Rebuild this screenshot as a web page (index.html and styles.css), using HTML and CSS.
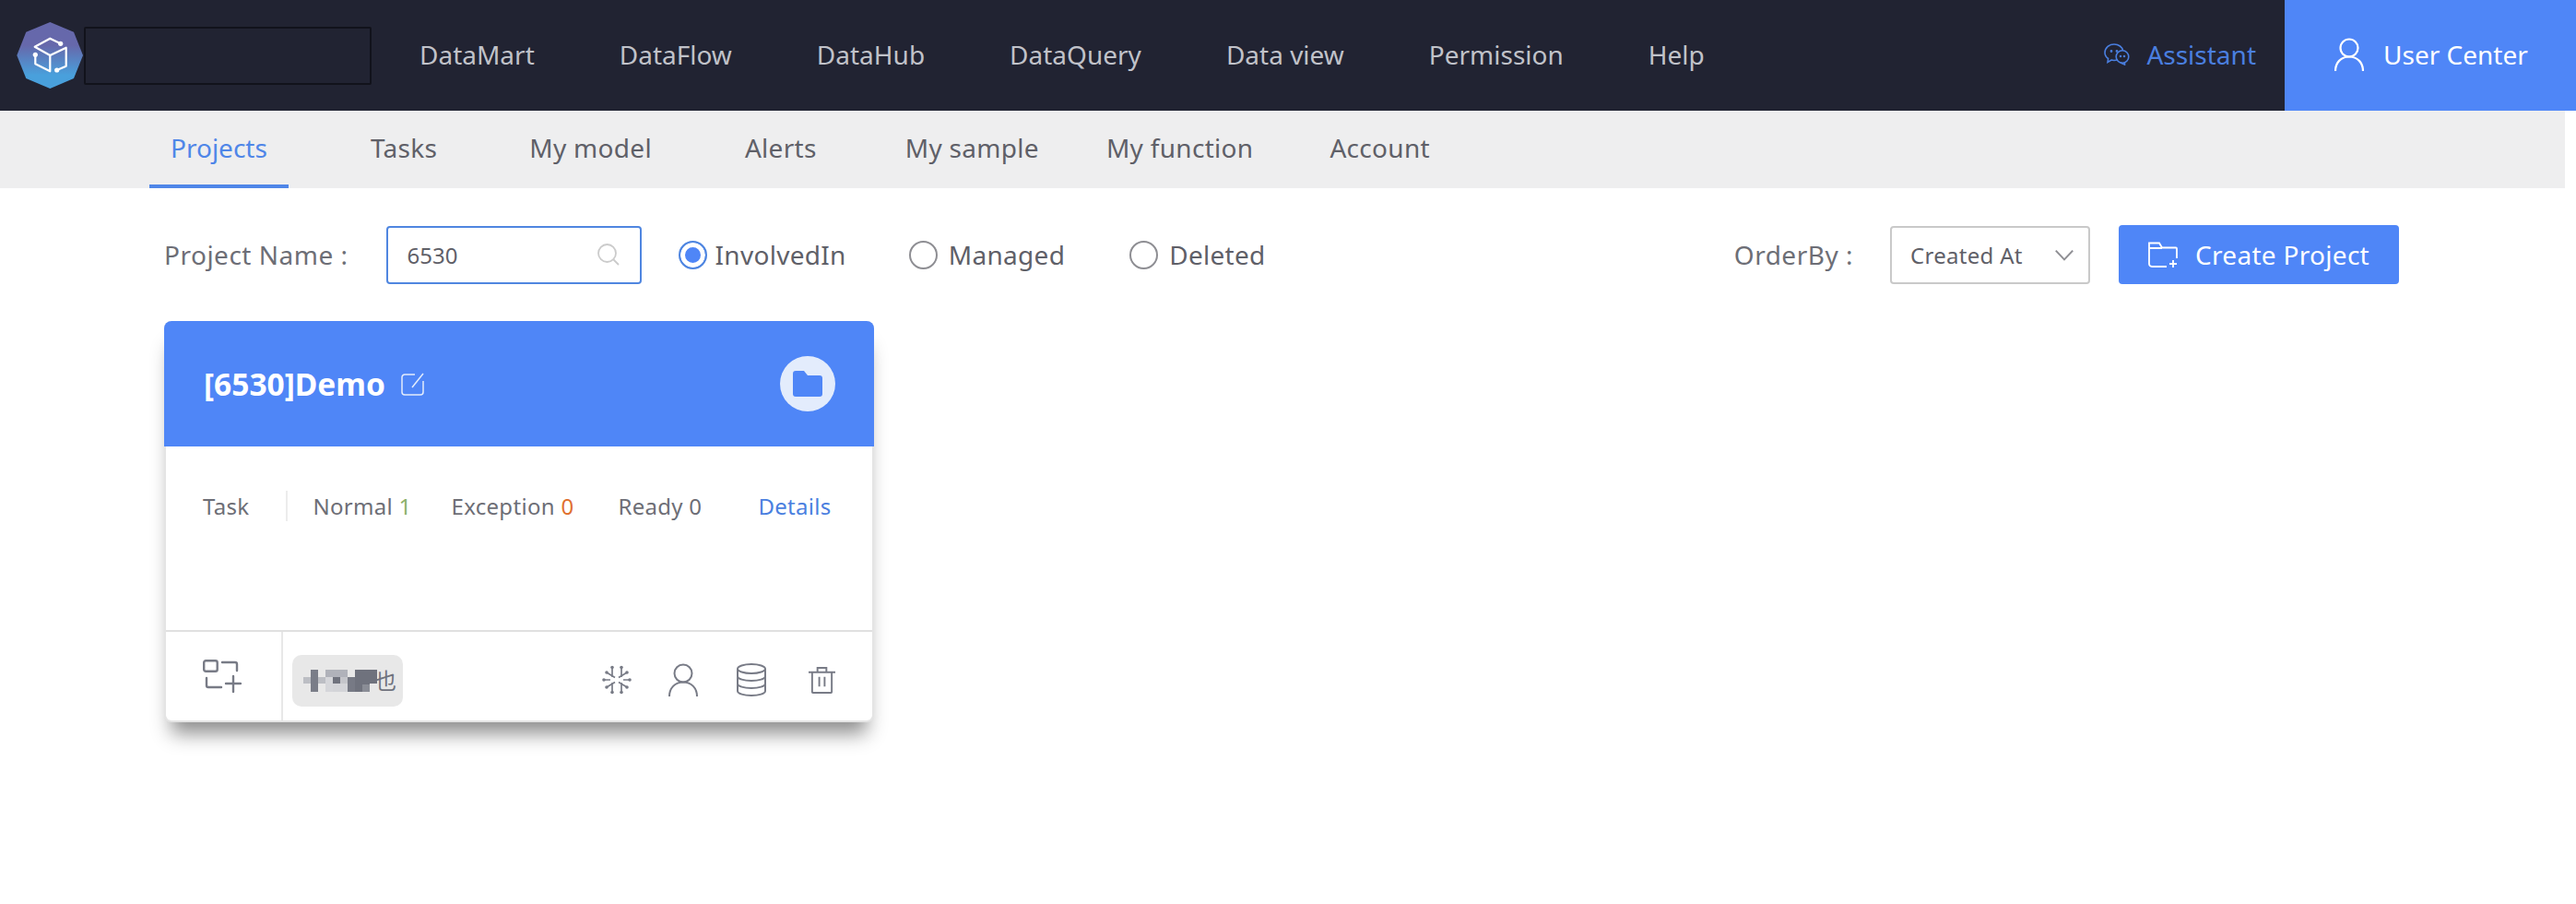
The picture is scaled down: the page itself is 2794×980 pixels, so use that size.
FILE: index.html
```html
<!DOCTYPE html>
<html>
<head>
  <title>Projects</title>
  <link rel="stylesheet" href="styles.css">
</head>
<body>
  <header class="topbar">
    <svg class="logo" viewBox="18 24 72 72">
      <defs>
        <linearGradient id="logoFill" x1="0" y1="0" x2="0" y2="1">
          <stop offset="0.35" stop-color="#6668ab"/>
          <stop offset="0.8" stop-color="#49a0dc"/>
        </linearGradient>
      </defs>
      <polygon points="54.3,24 80,34.7 90,60 80,85 54.3,96 28.3,85 18.3,60 28.3,34.7" fill="url(#logoFill)"/>
      <g fill="none" stroke="#fff" stroke-width="2.2" stroke-linejoin="round">
        <path d="M65.7 47.3L54.3 41.7 37.7 50.7 54.3 60 71.7 51.7V71.7L61.7 76"/>
        <path d="M54.3 60V77.3L38.3 69.3V59.3"/>
      </g>
      <circle cx="65.7" cy="47.3" r="2.6" fill="#fff"/>
      <circle cx="61.7" cy="76" r="2.6" fill="#fff"/>
      <circle cx="38.3" cy="59.3" r="2.6" fill="#fff"/>
    </svg>
    <div class="logo-name"></div>
    <nav class="main-nav">
      <a>DataMart</a>
      <a>DataFlow</a>
      <a>DataHub</a>
      <a>DataQuery</a>
      <a>Data view</a>
      <a>Permission</a>
      <a>Help</a>
    </nav>
    <a class="assistant">
      <svg class="assistant-icon" viewBox="0 0 28 24" fill="none" stroke="currentColor" stroke-width="1.6">
        <path d="M15 17.5C13 18.5 10 18.6 8 18L4 20.5 4.6 16.5C2 14.8 1 12.5 1 10 1 5 5.5 1 11 1 16 1 20 4 20.6 8"/>
        <circle cx="20" cy="14.5" r="6.8"/>
        <path d="M18 21L22.5 23 22.5 20.5"/>
        <circle cx="8" cy="8.5" r="0.6"/>
        <circle cx="14" cy="8.5" r="0.6"/>
        <circle cx="18" cy="14" r="0.5"/>
        <circle cx="22" cy="14" r="0.5"/>
      </svg>
      Assistant
    </a>
    <a class="user-center">
      <svg class="user-icon" viewBox="0 0 32 36" fill="none" stroke="currentColor" stroke-width="2.2">
        <circle cx="16" cy="11" r="9.5"/>
        <path d="M1 36C1 27 7 20.5 16 20.5S31 27 31 36"/>
      </svg>
      User Center
    </a>
  </header>

  <nav class="tabs">
    <a class="tab active">Projects</a>
    <a class="tab tab-tasks">Tasks</a>
    <a class="tab tab-model">My model</a>
    <a class="tab tab-alerts">Alerts</a>
    <a class="tab tab-sample">My sample</a>
    <a class="tab tab-function">My function</a>
    <a class="tab">Account</a>
  </nav>

  <main class="content">
    <div class="filters">
      <span class="label">Project Name :</span>
      <div class="search">
        <span>6530</span>
        <svg class="search-icon" viewBox="0 0 24 24" fill="none" stroke="#cbcbcb" stroke-width="1.8">
          <circle cx="10.5" cy="10.5" r="9.5"/>
          <path d="M17.5 17.5L23 23"/>
        </svg>
      </div>
      <label class="radio checked"><i></i>InvolvedIn</label>
      <label class="radio"><i></i>Managed</label>
      <label class="radio"><i></i>Deleted</label>
      <span class="label order-label">OrderBy :</span>
      <div class="order-select">
        <span>Created At</span>
        <svg class="chevron" viewBox="0 0 20 12" fill="none" stroke="#8e8e93" stroke-width="1.8">
          <path d="M1.5 1.5L10 10.5 18.5 1.5"/>
        </svg>
      </div>
      <button class="create-btn">
        <svg class="create-icon" viewBox="0 0 32 28" fill="none" stroke="#fff" stroke-width="1.8">
          <path d="M20 27H4a3 3 0 0 1-3-3V1.5h11l3 5h15a1 1 0 0 1 1 1V18"/>
          <path d="M1 7H15M27 20v8M23 24h8"/>
        </svg>
        Create Project
      </button>
    </div>

    <section class="card">
      <div class="card-head">
        <span class="card-title">[6530]Demo</span>
        <svg class="edit-icon" viewBox="0 0 25 25" fill="none" stroke="#e3ecfc" stroke-width="1.5">
          <path d="M15 2H4a3 3 0 0 0-3 3v16a3 3 0 0 0 3 3h17a3 3 0 0 0 3-3V9"/>
          <path d="M24 1L12 16"/>
        </svg>
        <span class="folder-badge">
          <svg viewBox="0 0 32 28" width="32" height="28">
            <path d="M3 0H12L16 5H29a3 3 0 0 1 3 3V25a3 3 0 0 1-3 3H3a3 3 0 0 1-3-3V3a3 3 0 0 1 3-3Z" fill="#4f86f7"/>
          </svg>
        </span>
      </div>
      <div class="card-stats">
        <span class="stat-title">Task</span>
        <span class="stat">Normal <b class="green">1</b></span>
        <span class="stat stat-exception">Exception <b class="orange">0</b></span>
        <span class="stat">Ready 0</span>
        <a class="details">Details</a>
      </div>
      <div class="card-foot">
        <div class="add-cell">
          <svg class="add-icon" viewBox="0 0 42 36" fill="none" stroke="#787b86" stroke-width="2.4" stroke-linecap="round">
            <rect x="1.2" y="1.2" width="14.5" height="11.5" rx="2"/>
            <path d="M21 3H35a2 2 0 0 1 2 2V12M4 20V28a2 2 0 0 0 2 2H20M33 18V35M25 26H41"/>
          </svg>
        </div>
        <div class="foot-main">
          <span class="tag">
            <svg class="mosaic" viewBox="0 0 80 24" width="80" height="24">
              <rect x="0" y="8" width="8" height="7" fill="#bcbec4"/>
              <rect x="8" y="0" width="8" height="24" fill="#7a7d88"/>
              <rect x="16" y="8" width="8" height="7" fill="#bcbec4"/>
              <rect x="24" y="0" width="8" height="8" fill="#b0b2ba"/>
              <rect x="24" y="8" width="8" height="16" fill="#d5d6da"/>
              <rect x="32" y="0" width="16" height="8" fill="#b0b2ba"/>
              <rect x="32" y="8" width="8" height="7" fill="#6f727d"/>
              <rect x="32" y="15" width="16" height="9" fill="#d3d4d8"/>
              <rect x="40" y="8" width="8" height="7" fill="#c4c5ca"/>
              <rect x="48" y="8" width="8" height="16" fill="#777a85"/>
              <rect x="56" y="0" width="8" height="24" fill="#6f727d"/>
              <rect x="64" y="0" width="8" height="16" fill="#6f727d"/>
              <rect x="64" y="16" width="8" height="8" fill="#8a8d96"/>
              <rect x="72" y="0" width="8" height="15" fill="#6f727d"/>
            </svg>
            <span class="tag-text">也</span>
          </span>
          <div class="foot-icons">
            <svg class="snow-icon" viewBox="0 0 32 32" fill="none" stroke="#787b86" stroke-width="1.7">
              <path d="M11 2V13M21 2V13M11 19V30M21 19V30M5 8L14 13.5M27 8L18 13.5M5 24L14 18.5M27 24L18 18.5M2 16H9M30 16H23"/>
              <g fill="#787b86" stroke="none">
                <circle cx="11" cy="2.5" r="1.8"/>
                <circle cx="21" cy="2.5" r="1.8"/>
                <circle cx="11" cy="29.5" r="1.8"/>
                <circle cx="21" cy="29.5" r="1.8"/>
                <circle cx="5" cy="8" r="1.8"/>
                <circle cx="27" cy="8" r="1.8"/>
                <circle cx="5" cy="24" r="1.8"/>
                <circle cx="27" cy="24" r="1.8"/>
                <circle cx="2" cy="16" r="1.8"/>
                <circle cx="30" cy="16" r="1.8"/>
              </g>
            </svg>
            <svg class="person-icon" viewBox="0 0 32 36" fill="none" stroke="#787b86" stroke-width="2">
              <circle cx="16" cy="11" r="9.5"/>
              <path d="M1 36C1 27 7 20.5 16 20.5S31 27 31 36"/>
            </svg>
            <svg class="db-icon" viewBox="0 0 32 36" fill="none" stroke="#787b86" stroke-width="2">
              <ellipse cx="16" cy="6" rx="15" ry="5"/>
              <path d="M1 6V30C1 33 8 35 16 35S31 33 31 30V6M1 14C1 17 8 19 16 19S31 17 31 14M1 22C1 25 8 27 16 27S31 25 31 22"/>
            </svg>
            <svg class="trash-icon" viewBox="0 0 30 30" fill="none" stroke="#787b86" stroke-width="2">
              <path d="M0 6H30M10 6V1H20V6M4 6V28a1 1 0 0 0 1 1H25a1 1 0 0 0 1-1V6M12 11V22M18 11V22"/>
            </svg>
          </div>
        </div>
      </div>
    </section>
  </main>
</body>
</html>
```

FILE: styles.css
```css
html,
body {
  height: 100%;
}
body {
  margin: 0;
  background: #fff;
  font-family: "Noto Sans", "Noto Sans CJK SC", sans-serif;
  font-size: 28px;
  color: #5f6068;
}
a {
  cursor: pointer;
}

/* top bar */
.topbar {
  display: flex;
  align-items: center;
  height: 120px;
  background: #212332;
}
.logo {
  width: 72px;
  height: 72px;
  margin-left: 18px;
  flex-shrink: 0;
}
.logo-name {
  width: 308px;
  height: 59px;
  margin-left: 1px;
  border: 2px solid #11121b;
  border-radius: 2px;
}
.main-nav {
  display: flex;
  gap: 92px;
  margin-left: 52px;
  padding-bottom: 2px;
  color: #c0c2c9;
}
.assistant {
  display: flex;
  align-items: center;
  gap: 18px;
  margin-left: auto;
  margin-right: 31px;
  padding-bottom: 2px;
  color: #4a7fe0;
}
.assistant-icon {
  width: 28px;
  height: 24px;
}
.user-center {
  display: flex;
  align-items: center;
  gap: 21px;
  box-sizing: border-box;
  width: 316px;
  height: 120px;
  padding: 0 0 2px 54px;
  background: #4f86f7;
  color: #fff;
}
.user-icon {
  width: 32px;
  height: 36px;
}

/* second row */
.tabs {
  display: flex;
  width: 2782px;
  height: 84px;
  padding-left: 162px;
  box-sizing: border-box;
  background: #eeeeef;
  letter-spacing: 0.3px;
}
.tab {
  height: 80px;
  padding: 0 23px;
  line-height: 80px;
}
.tab.active {
  color: #4f86e8;
  border-bottom: 4px solid #4f86e8;
  margin-right: 66px;
  letter-spacing: 0;
}
.tab-tasks {
  margin-right: 54px;
}
.tab-model {
  margin-right: 55px;
}
.tab-alerts {
  margin-right: 50px;
}
.tab-sample {
  margin-right: 27px;
}
.tab-function {
  margin-right: 37px;
}

.content {
  padding: 40px 0 0 178px;
}

/* filter row */
.filters {
  display: flex;
  align-items: center;
  height: 64px;
  width: 2424px;
}
.label {
  color: #6d6e76;
  letter-spacing: 0.5px;
}
.search {
  display: flex;
  align-items: center;
  justify-content: space-between;
  box-sizing: border-box;
  width: 277px;
  height: 63px;
  margin-left: 42px;
  padding: 0 22px 0 20px;
  border: 2px solid #4f86e0;
  border-radius: 4px;
  font-size: 24px;
}
.search-icon {
  width: 24px;
  height: 24px;
}
.radio {
  display: flex;
  align-items: center;
  gap: 12px;
  margin-right: 70px;
  letter-spacing: 0.3px;
}
.radio.checked {
  gap: 8px;
  margin: 0 68px 0 40px;
}
.radio i {
  box-sizing: border-box;
  width: 31px;
  height: 31px;
  border: 2px solid #8e8e93;
  border-radius: 50%;
}
.radio.checked i {
  border-color: #4f86e0;
  background: #4f86f7;
  box-shadow: inset 0 0 0 5px #fff;
}
.order-label {
  margin-left: auto;
}
.order-select {
  display: flex;
  align-items: center;
  justify-content: space-between;
  box-sizing: border-box;
  width: 217px;
  height: 63px;
  margin-left: 40px;
  padding: 0 15px 0 20px;
  border: 2px solid #c9c9c9;
  border-radius: 4px;
  font-size: 24px;
  letter-spacing: 0.3px;
}
.chevron {
  width: 22px;
  height: 13px;
}
.create-btn {
  display: flex;
  align-items: center;
  gap: 19px;
  box-sizing: border-box;
  width: 304px;
  height: 64px;
  margin-left: 31px;
  padding: 0 0 0 32px;
  border: none;
  border-radius: 4px;
  background: #4f86f7;
  color: #fff;
  font-family: inherit;
  font-size: 28px;
  letter-spacing: 0.3px;
}
.create-icon {
  width: 32px;
  height: 28px;
}

/* project card */
.card {
  box-sizing: border-box;
  width: 770px;
  height: 435px;
  margin-top: 40px;
  background: #fff;
  border-radius: 8px;
  box-shadow: 0 20px 20px -8px rgba(0, 0, 0, 0.45);
  border: 2px solid #e4e4e4;
  border-top: none;
}
.card-head {
  display: flex;
  align-items: center;
  height: 136px;
  margin: 0 -2px;
  padding: 0 42px 0 43px;
  background: #4f86f7;
  border-radius: 8px 8px 0 0;
  color: #fff;
}
.card-title {
  font-size: 33.5px;
  font-weight: 700;
}
.edit-icon {
  width: 25px;
  height: 25px;
  margin-left: 17px;
}
.folder-badge {
  display: flex;
  align-items: center;
  justify-content: center;
  width: 60px;
  height: 60px;
  margin-left: auto;
  border-radius: 50%;
  background: #e3ecfc;
}
.card-stats {
  display: flex;
  align-items: center;
  height: 128px;
  padding: 0 0 2px 40px;
  margin-bottom: 69px;
  font-size: 24px;
  letter-spacing: 0.3px;
  color: #6d6e76;
}
.stat-title {
  padding-right: 40px;
  margin-right: 27px;
  border-right: 2px solid #ececec;
}
.stat {
  margin-right: 43px;
}
.stat-exception {
  margin-right: 48px;
}
.stat b {
  font-weight: 400;
}
.green {
  color: #8bb26a;
}
.orange {
  color: #e0702e;
}
.details {
  margin-left: 18px;
  color: #4a7fe0;
}
.card-foot {
  display: flex;
  height: 96px;
  border-top: 2px solid #e0e0e0;
}
.add-cell {
  box-sizing: border-box;
  width: 127px;
  padding: 30px 0 0 40px;
  border-right: 2px solid #e8e8e8;
}
.add-icon {
  display: block;
  width: 42px;
  height: 36px;
}
.foot-main {
  display: flex;
  align-items: center;
  flex: 1;
  padding: 8px 0 0 10px;
}
.tag {
  display: flex;
  align-items: center;
  box-sizing: border-box;
  width: 120px;
  height: 56px;
  margin-top: 2px;
  padding-left: 12px;
  border-radius: 10px;
  background: #e8e8e8;
}
.tag-text {
  margin-left: -3px;
  font-size: 24px;
  line-height: 24px;
  color: #6f727d;
}
.foot-icons {
  display: flex;
  align-items: center;
  gap: 42px;
  margin-left: auto;
  margin-right: 40px;
}
.snow-icon {
  width: 32px;
  height: 32px;
}
.person-icon,
.db-icon {
  width: 32px;
  height: 36px;
}
.person-icon {
  margin-left: -2px;
}
.trash-icon {
  width: 29px;
  height: 29px;
  margin-left: 4px;
}
```
